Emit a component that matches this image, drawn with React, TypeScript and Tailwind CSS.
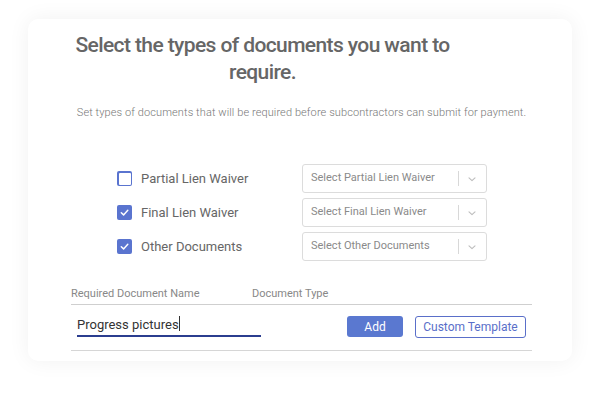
import React from "react";

const Check = ({ checked }: { checked: boolean }) =>
  checked ? (
    <div className="w-[15px] h-[15px] rounded-[2px] bg-[#5a74cf] flex items-center justify-center">
      <svg width="11" height="11" viewBox="0 0 12 12" fill="none">
        <path d="M2.5 6.2 L5 8.6 L9.6 3.6" stroke="white" strokeWidth="1.6" strokeLinecap="round" strokeLinejoin="round" />
      </svg>
    </div>
  ) : (
    <div className="w-[15px] h-[15px] rounded-[2px] bg-[#5a74cf] p-[1.5px]">
      <div className="w-full h-full rounded-[1px] bg-white" />
    </div>
  );

const Row = ({ label, placeholder, checked }: { label: string; placeholder: string; checked: boolean }) => (
  <div className="flex items-center">
    <div className="w-[185px] flex items-center gap-[9px]">
      <Check checked={checked} />
      <span className="text-[13px] text-[#666]">{label}</span>
    </div>
    <div className="w-[185px] h-[29px] border border-[#dcdcdc] rounded-[3px] flex items-center pl-[8px] pr-[8px]">
      <span className="flex-1 text-[11px] text-[#8a8a8a]">{placeholder}</span>
      <div className="w-px h-[15px] bg-[#d8d8d8]" />
      <svg className="ml-[8px] mr-[1px]" width="10" height="10" viewBox="0 0 10 10" fill="none">
        <path d="M2 3.8 L5 6.6 L8 3.8" stroke="#bdbdbd" strokeWidth="1.1" strokeLinecap="round" strokeLinejoin="round" />
      </svg>
    </div>
  </div>
);

export default function App() {
  return (
    <div className="w-[600px] h-[397px] bg-white overflow-hidden" style={{ fontFamily: "Roboto, 'Liberation Sans', sans-serif" }}>
      <div className="ml-[28px] mt-[19px] w-[544px] h-[342px] bg-white rounded-[10px] shadow-[0_0_22px_rgba(0,0,0,0.06)] pl-[43px] pr-[40px] pt-[13px]">
        <h1 className="text-center text-[21px] leading-[27px] font-medium tracking-[-0.6px] text-[#666] pr-[78px]">
          Select the types of documents you want to
          <br />
          require.
        </h1>
        <p className="text-center text-[11px] leading-[16px] font-light tracking-[0.1px] text-[#777] mt-[19px]">
          Set types of documents that will be required before subcontractors can submit for payment.
        </p>
        <div className="ml-[46px] mt-[43px] flex flex-col gap-[5px]">
          <Row label="Partial Lien Waiver" placeholder="Select Partial Lien Waiver" checked={false} />
          <Row label="Final Lien Waiver" placeholder="Select Final Lien Waiver" checked={true} />
          <Row label="Other Documents" placeholder="Select Other Documents" checked={true} />
        </div>
        <div className="mt-[25px] flex text-[11px] text-[#888] leading-[16px] pb-[2px] border-b border-[#cfcfcf]">
          <span className="w-[181px]">Required Document Name</span>
          <span>Document Type</span>
        </div>
        <div className="flex items-start pt-[8px] pb-[12px] border-b border-[#d6d6d6]">
          <div className="ml-[6px] w-[184px] border-b-2 border-[#2b3d8f] leading-[21px]">
            <span className="text-[13px] text-[#333]">Progress pictures</span>
            <span className="inline-block w-px h-[15px] bg-[#333] align-middle -mt-[2px]" />
          </div>
          <div className="flex-1" />
          <button className="w-[56px] h-[21px] bg-[#5a78d0] rounded-[3px] text-white text-[12px] leading-none mt-[3px]">Add</button>
          <button className="ml-[12px] mr-[6px] w-[111px] h-[22px] border-[1.5px] border-[#5a6fc9] rounded-[3px] text-[#5a6fc9] text-[12px] leading-none mt-[3px]">Custom Template</button>
        </div>
      </div>
    </div>
  );
}
